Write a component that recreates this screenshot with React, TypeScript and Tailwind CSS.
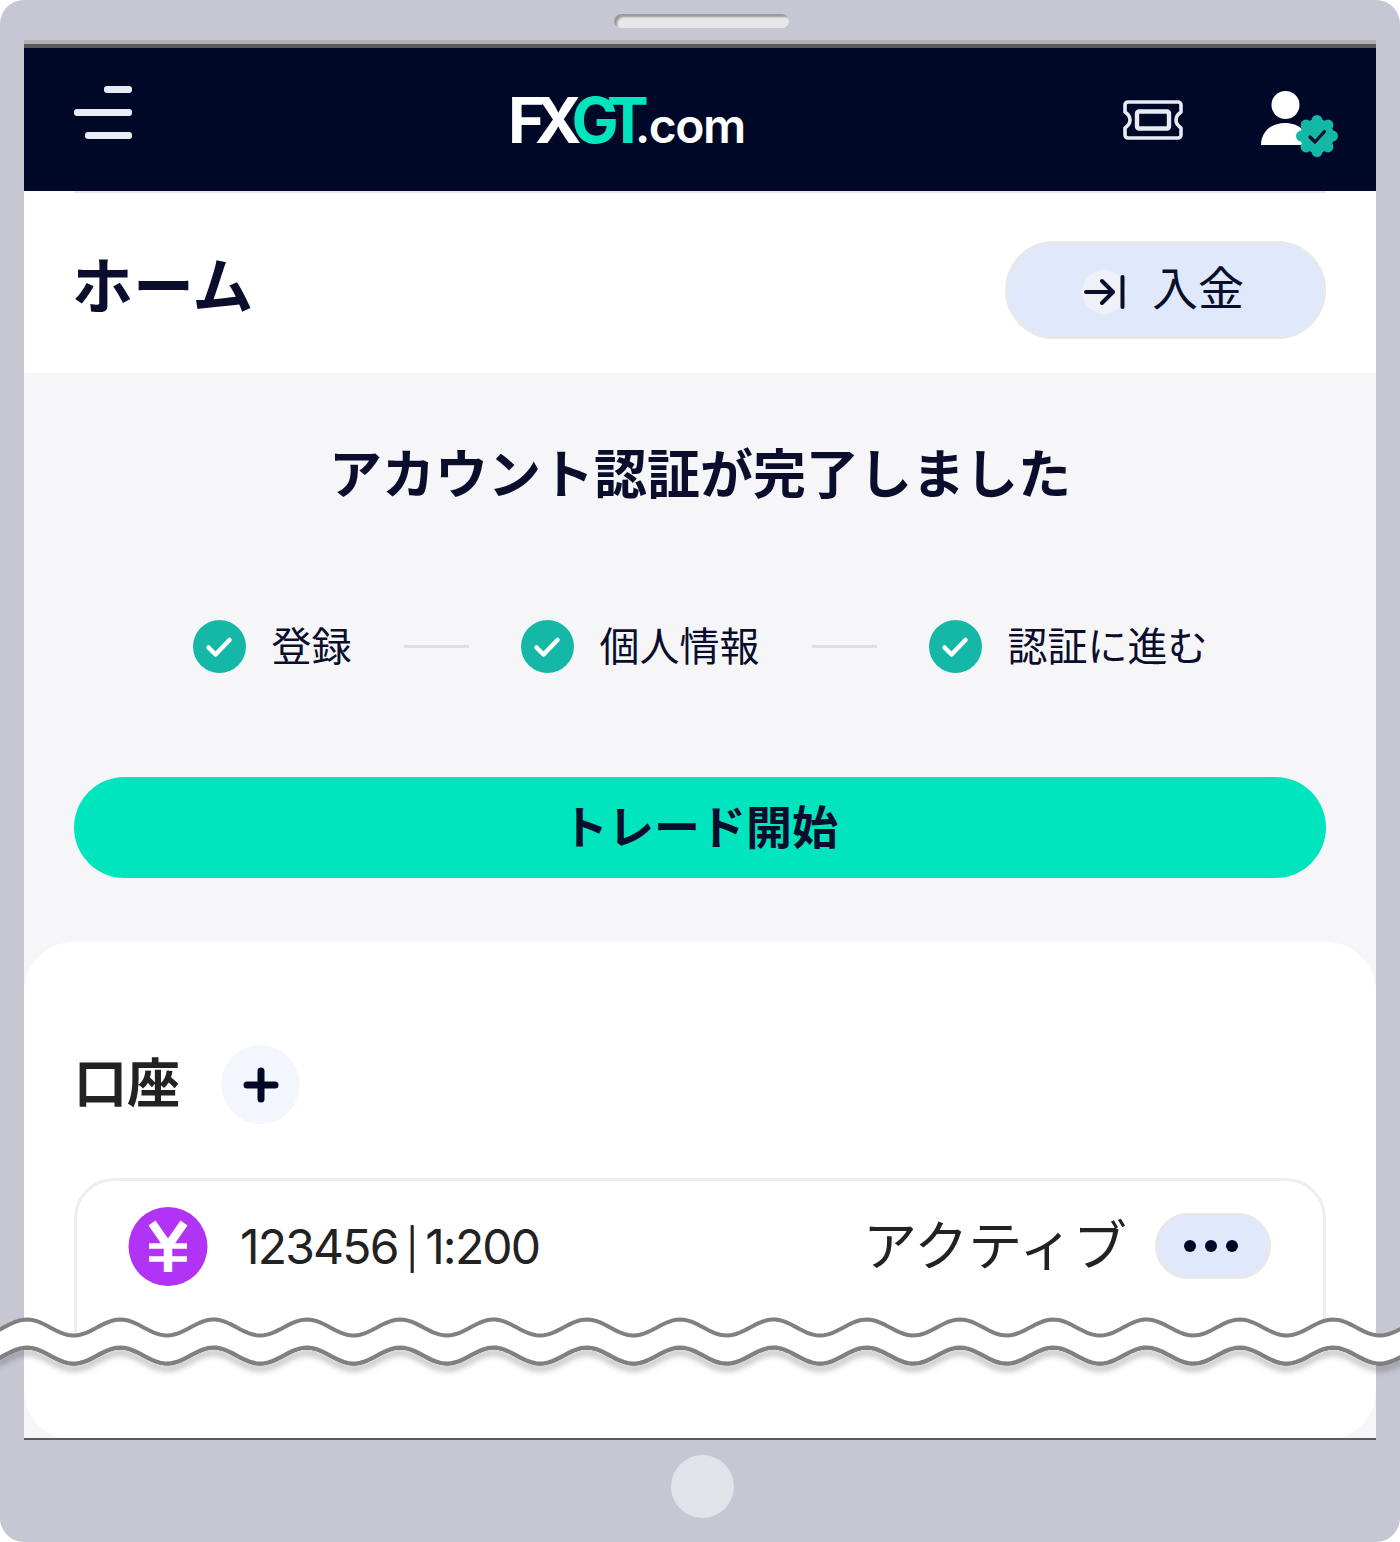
const jp = "font-['Noto_Sans_CJK_JP','Noto_Sans',sans-serif]";

// sine line across the whole frame, crest at x=27 and every 93.3px after
function wave(mid: number, reverse = false) {
  const pts: string[] = [];
  for (let x = -4; x <= 1404; x += 4) {
    const y = mid - 8 * Math.cos((2 * Math.PI * (x - 27)) / 93.3);
    pts.push(`${x} ${y.toFixed(2)}`);
  }
  return (reverse ? pts.reverse() : pts).join(' L');
}

function WaveBreak() {
  const top = wave(17.5);
  const bottom = wave(45.5);
  const band = `M${top} L${wave(45.5, true)} Z`;
  return (
    <svg className="absolute left-0 top-[1310px] w-[1400px] h-[70px] overflow-visible" viewBox="0 0 1400 70" fill="none">
      <path d={`M${bottom}`} stroke="#000" strokeOpacity="0.6" strokeWidth="4" className="drop-shadow-[0_5px_3px_rgba(0,0,0,0.6)]" />
      <path d={band} fill="#fff" />
      <path d={`M${top}`} stroke="#808080" strokeWidth="4" />
      <path d={`M${bottom}`} stroke="#808080" strokeWidth="4" />
    </svg>
  );
}

function Burger() {
  return (
    <div className="flex flex-col items-end gap-[16px] w-[58px] mb-[14px]">
      <div className="w-[28px] h-[7px] rounded-[3px] bg-[#e9ebf4]" />
      <div className="w-[58px] h-[7px] rounded-[3px] bg-[#e9ebf4]" />
      <div className="w-[47px] h-[7px] rounded-[3px] bg-[#e9ebf4]" />
    </div>
  );
}

function Ticket() {
  return (
    <svg width="60" height="40" viewBox="0 0 60 40" fill="none" stroke="#e9ebf4" className="ml-[381px]">
      <path d="M5 2H55a3 3 0 0 1 3 3V12Q53 15.5 53 20T58 28V35a3 3 0 0 1-3 3H5a3 3 0 0 1-3-3V28Q7 24.5 7 20T2 12V5A3 3 0 0 1 5 2Z" strokeWidth="3.6" strokeLinejoin="round" />
      <rect x="14" y="11.5" width="32" height="17" rx="2" strokeWidth="4.4" />
    </svg>
  );
}

function VerifiedUser() {
  const bumps = [0, 1, 2, 3, 4, 5, 6, 7];
  return (
    <svg width="78" height="70" viewBox="0 0 78 70" className="ml-[78px] mt-[10px]">
      <circle cx="24.5" cy="15" r="14" fill="#fff" />
      <path d="M0 55C0 42 10 33 24 33S48 42 48 55Z" fill="#fff" />
      <g fill="#15b8a6">
        <circle cx="56" cy="46" r="17" />
        {bumps.map((i) => (
          <circle key={i} cx={56 + 15.5 * Math.cos((i * Math.PI) / 4)} cy={46 + 15.5 * Math.sin((i * Math.PI) / 4)} r="5.5" />
        ))}
      </g>
      <path d="M49 47l5 5 9.5-10.5" fill="none" stroke="#0a0e2c" strokeWidth="3.2" strokeLinecap="round" strokeLinejoin="round" />
    </svg>
  );
}

function Step({ label }: { label: string }) {
  return (
    <div className="flex items-center gap-[26px]">
      <div className="w-[53px] h-[53px] rounded-full bg-[#15b8a6] flex items-center justify-center">
        <svg width="28" height="22" viewBox="0 0 28 22" fill="none">
          <path d="M3.5 11.5l7 7L24.5 4" stroke="#fff" strokeWidth="4.5" strokeLinecap="round" strokeLinejoin="round" />
        </svg>
      </div>
      <span className="text-[40px] leading-none text-[#0a0e2c] -mt-[6px]">{label}</span>
    </div>
  );
}

function Divider() {
  return <div className="w-[65px] h-[3px] mx-[52px] bg-[#dedee1]" />;
}

export default function App() {
  return (
    <div className={`relative w-[1400px] h-[1542px] overflow-hidden bg-white ${jp}`}>
      <div className="w-full h-full rounded-[24px] bg-[#c7c7d4] flex flex-col">
        <div className="h-[40px] pt-[14px] flex justify-center pl-[3px]">
          <div className="w-[175px] h-[14px] rounded-full bg-[#e8e8e8] shadow-[inset_3px_3px_2px_#9a9a9a]" />
        </div>

        <div className="mx-[24px] h-[1400px] flex flex-col bg-[#f6f6f9]">
          <div className="h-[4px] bg-[#b0b0b2]" />
          <div className="h-[4px] bg-[#59595b]" />

          <header className="h-[143px] bg-[#000828] flex items-center pl-[50px]">
            <Burger />
            <div className="ml-[376px] w-[234px] -mb-[2px] flex items-baseline whitespace-nowrap font-['Inter',sans-serif] text-white">
              <span className="text-[63px] leading-none font-bold tracking-[-10px]">FX</span>
              <span className="text-[63px] leading-none font-bold tracking-[-10px] text-[#00e5bd]">GT</span>
              <span className="-ml-[4px] text-[48px] leading-none font-semibold tracking-[-1.5px]">.com</span>
            </div>
            <Ticket />
            <VerifiedUser />
          </header>

          <div className="bg-white shrink-0">
            <div className="h-[2px] mx-[50px] bg-[#e8e8e8]" />
            <div className="h-[180px] px-[50px] flex items-center justify-between">
              <h1 className="text-[61px] leading-none font-bold text-[#0a0e2c] -ml-[2px] -mt-[1px]">ホーム</h1>
              <button className="w-[321px] h-[98px] mt-[13px] rounded-full bg-[#e0e9fb] border-[3px] border-[#e8e8ea] flex items-center pl-[74px] gap-[26px] text-[#0a0e2c]">
                <span className="relative w-[44px] h-[44px] rounded-full bg-[#eff1f7] mt-[4px]">
                  <svg className="absolute left-[2px] top-[4px]" width="42" height="36" viewBox="0 0 42 36" fill="none" stroke="#0a0e2c" strokeWidth="4" strokeLinecap="round" strokeLinejoin="round">
                    <path d="M2 18H28M18 7l11 11-11 11" />
                    <path d="M38.5 3V33" />
                  </svg>
                </span>
                <span className="text-[46px] leading-none -mt-[10px]">入金</span>
              </button>
            </div>
          </div>

          <h2 className="mt-[68px] text-center text-[53px] leading-[60px] font-bold text-[#0a0e2c]">アカウント認証が完了しました</h2>

          <div className="mt-[119px] flex items-center justify-center">
            <Step label="登録" />
            <Divider />
            <Step label="個人情報" />
            <Divider />
            <Step label="認証に進む" />
          </div>

          <button className="mx-[50px] mt-[104px] h-[101px] pb-[6px] shrink-0 rounded-full bg-[#00e5bd] text-[46px] font-bold text-[#0a0e2c]">トレード開始</button>

          <section className="mt-[64px] flex-1 rounded-[50px] bg-white px-[50px] pt-[103px] overflow-hidden">
            <div className="flex items-center gap-[41px]">
              <span className="text-[53px] leading-none font-bold text-[#222] -mt-[8px]">口座</span>
              <span className="w-[79px] h-[79px] rounded-full bg-[#f3f7fd] flex items-center justify-center">
                <svg width="36" height="36" viewBox="0 0 36 36" fill="none" stroke="#000828" strokeWidth="7" strokeLinecap="round">
                  <path d="M18 4V32M4 18H32" />
                </svg>
              </span>
            </div>

            <div className="mt-[54px] h-[165px] rounded-t-[40px] border-[3px] border-b-0 border-[#eeeeef] pl-[51px] pr-[52px] pt-[26px] flex items-start">
              <svg width="80" height="80" viewBox="0 0 80 80" fill="none" className="shrink-0">
                <circle cx="40" cy="39.5" r="39.5" fill="#b133f5" />
                <path d="M24 16L40 39 56 16M40 39V65" stroke="#fff" strokeWidth="8.5" />
                <path d="M21 39H59M21 52H59" stroke="#fff" strokeWidth="5.5" />
              </svg>
              <span className="ml-[32px] mt-[16px] text-[48px] leading-none text-[#222] font-['Inter',sans-serif] tracking-[-1.8px] whitespace-nowrap">
                123456<span className="mx-[8px] text-[40px]">|</span>1:200
              </span>
              <span className="ml-auto mt-[9px] text-[54px] leading-none text-[#222]">アクティブ</span>
              <button className="ml-[28px] mt-[6px] w-[116px] h-[66px] pr-[4px] rounded-full bg-[#e0e9fb] border-[3px] border-[#e8e8ea] flex items-center justify-center gap-[9px]">
                <span className="w-[12px] h-[12px] rounded-full bg-[#000828]" />
                <span className="w-[12px] h-[12px] rounded-full bg-[#000828]" />
                <span className="w-[12px] h-[12px] rounded-full bg-[#000828]" />
              </button>
            </div>
          </section>
          <div className="h-[2px] bg-[#59595b] -mt-[2px] relative" />
        </div>

        <div className="flex-1 flex items-center justify-center pl-[4px]">
          <div className="w-[63px] h-[63px] rounded-full bg-[#e2e2e9] mt-[-10px]" />
        </div>
      </div>
      <WaveBreak />
    </div>
  );
}
